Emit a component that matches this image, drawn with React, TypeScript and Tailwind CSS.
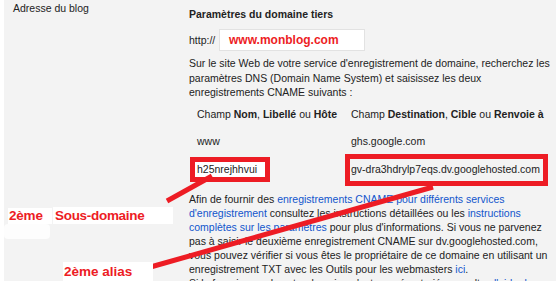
export default function App() {
  const red = "text-[#ed1c24]";
  return (
    <div className="relative w-[556px] h-[281px] overflow-hidden flex bg-white text-[10.5px] text-[#222] font-['Liberation_Sans',Arial,sans-serif]">
      <div className="w-[4px] bg-white" />
      <div className="flex-1 flex bg-[#f3f3f3]">
        <div className="w-[185px] pl-[9px] pt-[1px] leading-[15px]">Adresse du blog</div>
        <div className="w-[364px] pt-[7px] leading-[15px]">
          <div className="font-bold">Paramètres du domaine tiers</div>

          <div className="flex items-center mt-[7px]">
            <span className="w-[30px]">http://</span>
            <div className="w-[146px] h-[22px] bg-white border border-[#e2e2e2] flex items-center pl-[9px]">
              <span className={`font-bold text-[12px] ${red}`}>www.monblog.com</span>
            </div>
          </div>

          <p className="mt-[5px] leading-[14.5px]">
            Sur le site Web de votre service d'enregistrement de domaine, recherchez les paramètres DNS (Domain
            Name System) et saisissez les deux enregistrements CNAME suivants :
          </p>

          <div className="mt-[7px]">
            <div className="flex">
              <div className="w-[156px] pl-[8px] whitespace-nowrap">
                Champ <b>Nom</b>, <b>Libellé</b> ou <b>Hôte</b>
              </div>
              <div className="pl-[6px] whitespace-nowrap">
                Champ <b>Destination</b>, <b>Cible</b> ou <b>Renvoie à</b>
              </div>
            </div>
            <div className="flex mt-[12px]">
              <div className="w-[156px] pl-[8px]">www</div>
              <div className="pl-[6px]">ghs.google.com</div>
            </div>
            <div className="flex items-center mt-[5px] h-[32px]">
              <div className="w-[156px] pl-[1px]">
                <span className="inline-flex items-center w-[80px] h-[25px] border-[5px] border-[#ed1c24] bg-white pl-[2px]">
                  h25nrejhhvui
                </span>
              </div>
              <div className="flex items-center w-[203px] h-[32px] border-[5px] border-[#ed1c24] pl-[1px] whitespace-nowrap">
                gv-dra3hdrylp7eqs.dv.googlehosted.com
              </div>
            </div>
          </div>

          <p className="mt-[6px] leading-[14px]">
            Afin de fournir des{" "}
            <span className="text-[#15c]">enregistrements CNAME pour différents services d'enregistrement</span>{" "}
            consultez les instructions détaillées ou les{" "}
            <span className="text-[#15c]">instructions complètes sur les paramètres</span> pour plus d'informations. Si
            vous ne parvenez pas à saisir le deuxième enregistrement CNAME sur dv.googlehosted.com, vous pouvez vérifier
            si vous êtes le propriétaire de ce domaine en utilisant un enregistrement TXT avec les Outils pour les
            webmasters <span className="text-[#15c]">ici</span>.
            <br />
            Si le fournisseur de votre domaine n'est pas répertorié, consultez{" "}
            <span className="text-[#15c]">l'aide de votre fournisseur</span>.
          </p>
        </div>
      </div>

      {/* annotations drawn over the page */}
      <svg className="absolute inset-0 pointer-events-none" width="556" height="281">
        <line x1="167" y1="201" x2="212" y2="176" stroke="#ed1c24" strokeWidth="5" />
        <line x1="147" y1="268" x2="433" y2="187" stroke="#ed1c24" strokeWidth="5" />
      </svg>
      <div className="absolute left-[8px] top-[208px] w-[44px] h-[16px] bg-white" />
      <div className="absolute left-[4px] top-[224px] w-[46px] h-[15px] bg-white opacity-80 rounded-sm" />
      <div className={`absolute left-[9px] top-[207px] font-bold text-[13.5px] tracking-[-0.2px] leading-[18px] ${red}`}>2ème</div>
      <div className={`absolute left-[53px] top-[207px] w-[120px] h-[17px] bg-white pl-[2px] font-bold text-[13.5px] tracking-[-0.3px] leading-[18px] ${red}`}>
        Sous-domaine
      </div>
      <div className={`absolute left-[63px] top-[262px] w-[90px] h-[19px] bg-white pl-[1px] pt-[1px] font-bold text-[13.5px] leading-[18px] ${red}`}>
        2ème alias
      </div>
    </div>
  );
}
